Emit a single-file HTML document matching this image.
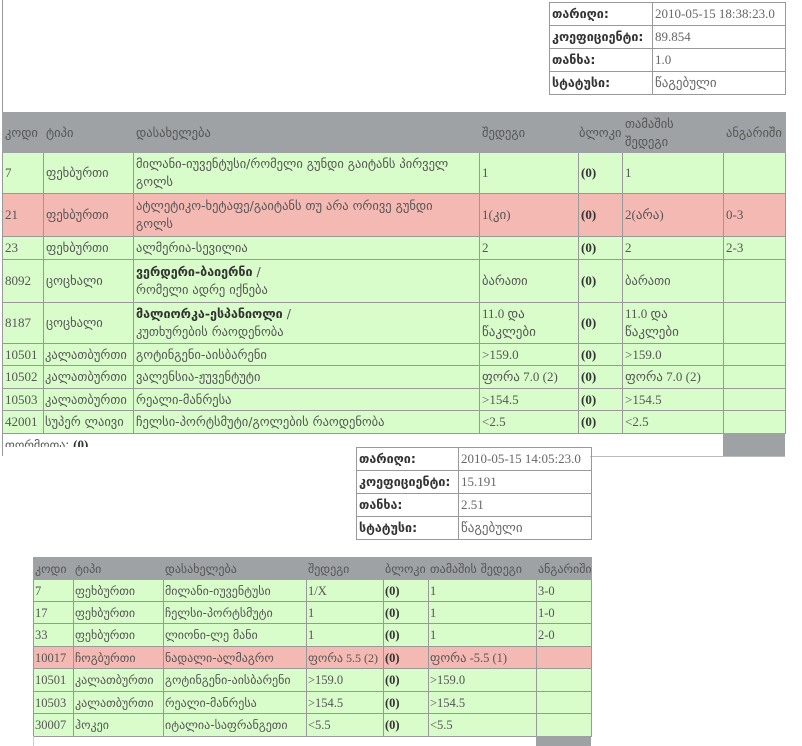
<!DOCTYPE html>
<html><head><meta charset="utf-8"><style>
body{margin:0;width:802px;height:746px;overflow:hidden;background:#fff;font-family:"DejaVu Sans","Liberation Sans",sans-serif;color:#555;font-size:12.5px;position:relative}
table{border-collapse:collapse;position:absolute;table-layout:fixed}
td{border:1px solid #999;padding:0 2px;vertical-align:middle;line-height:18px;overflow:hidden;white-space:nowrap}
.info td{height:22px}
.info td.k{font-weight:bold;color:#333}
.info td.v{font-family:"Liberation Serif",serif;font-size:13px;color:#666}
tr.h td{background:#9ea2a5;border-color:#9ea2a5;color:#555;white-space:normal}
tr.g td{background:#d9fccb}
tr.r td{background:#f5b9b4}
td.b{font-weight:bold;color:#333;font-family:"Liberation Serif",serif;font-size:13px}
.n{font-family:"Liberation Serif",serif;font-size:13px}
.m td{white-space:normal}
.t2 td{font-size:12px;padding:0 1px}
.t2 td.n,.t2 td.b{font-size:12.5px}
</style></head><body>

<div style="position:absolute;left:2px;top:0;width:1px;height:456px;background:#999"></div>

<table class="info" style="left:549px;top:2px;width:236px">
<col style="width:103px"><col style="width:133px">
<tr><td class="k">თარიღი:</td><td class="v">2010-05-15 18:38:23.0</td></tr>
<tr><td class="k">კოეფიციენტი:</td><td class="v">89.854</td></tr>
<tr><td class="k">თანხა:</td><td class="v">1.0</td></tr>
<tr><td class="k">სტატუსი:</td><td class="v">წაგებული</td></tr>
</table>

<table class="m" style="left:2px;top:112px;width:783px">
<col style="width:41px"><col style="width:90px"><col style="width:346px"><col style="width:99px"><col style="width:44px"><col style="width:101px"><col style="width:62px">
<tr class="h" style="height:40px"><td>კოდი</td><td>ტიპი</td><td>დასახელება</td><td>შედეგი</td><td style="padding:0">ბლოკი</td><td>თამაშის<br>შედეგი</td><td>ანგარიში</td></tr>
<tr class="g" style="height:41px"><td class="n">7</td><td>ფეხბურთი</td><td>მილანი-იუვენტუსი/რომელი გუნდი გაიტანს პირველ<br>გოლს</td><td class="n">1</td><td class="b">(0)</td><td class="n">1</td><td></td></tr>
<tr class="r" style="height:43px"><td class="n">21</td><td>ფეხბურთი</td><td>ატლეტიკო-ხეტაფე/გაიტანს თუ არა ორივე გუნდი<br>გოლს</td><td class="n">1(კი)</td><td class="b">(0)</td><td class="n">2(არა)</td><td class="n">0-3</td></tr>
<tr class="g" style="height:23px"><td class="n">23</td><td>ფეხბურთი</td><td>ალმერია-სევილია</td><td class="n">2</td><td class="b">(0)</td><td class="n">2</td><td class="n">2-3</td></tr>
<tr class="g" style="height:43px"><td class="n">8092</td><td>ცოცხალი</td><td><b style="color:#333">ვერდერი-ბაიერნი</b> /<br>რომელი ადრე იქნება</td><td>ბარათი</td><td class="b">(0)</td><td>ბარათი</td><td></td></tr>
<tr class="g" style="height:41px"><td class="n">8187</td><td>ცოცხალი</td><td><b style="color:#333">მალიორკა-ესპანიოლი</b> /<br>კუთხურების რაოდენობა</td><td class="n">11.0 და<br>წაკლები</td><td class="b">(0)</td><td class="n">11.0 და<br>წაკლები</td><td></td></tr>
<tr class="g" style="height:22px"><td class="n">10501</td><td style="padding:0 1px">კალათბურთი</td><td>გოტინგენი-აისბარენი</td><td class="n">&gt;159.0</td><td class="b">(0)</td><td class="n">&gt;159.0</td><td></td></tr>
<tr class="g" style="height:23px"><td class="n">10502</td><td style="padding:0 1px">კალათბურთი</td><td>ვალენსია-ჟუვენტუტი</td><td class="n">ფორა 7.0 (2)</td><td class="b">(0)</td><td class="n">ფორა 7.0 (2)</td><td></td></tr>
<tr class="g" style="height:22px"><td class="n">10503</td><td style="padding:0 1px">კალათბურთი</td><td>რეალი-მანრესა</td><td class="n">&gt;154.5</td><td class="b">(0)</td><td class="n">&gt;154.5</td><td></td></tr>
<tr class="g" style="height:23px"><td class="n">42001</td><td style="padding:0 1px">სუპერ ლაივი</td><td>ჩელსი-პორტსმუტი/გოლების რაოდენობა</td><td class="n">&lt;2.5</td><td class="b">(0)</td><td class="n">&lt;2.5</td><td></td></tr>
</table>
<div style="position:absolute;left:723px;top:433px;width:62px;height:23px;background:#9ea2a5"></div>
<div style="position:absolute;left:590px;top:456px;width:195px;height:1px;background:#bbb"></div>
<div style="position:absolute;left:5px;top:437px;height:10px;overflow:hidden;line-height:16px;font-size:12px">ფორმოთა: <b class="n" style="color:#333">(0)</b></div>

<table class="info" style="left:356px;top:447px;width:235px">
<col style="width:102px"><col style="width:133px">
<tr><td class="k">თარიღი:</td><td class="v">2010-05-15 14:05:23.0</td></tr>
<tr><td class="k">კოეფიციენტი:</td><td class="v">15.191</td></tr>
<tr><td class="k">თანხა:</td><td class="v">2.51</td></tr>
<tr><td class="k">სტატუსი:</td><td class="v">წაგებული</td></tr>
</table>

<table class="t2" style="left:33px;top:557px;width:558px">
<col style="width:40px"><col style="width:90px"><col style="width:143px"><col style="width:77px"><col style="width:45px"><col style="width:108px"><col style="width:55px">
<tr class="h" style="height:22px"><td>კოდი</td><td>ტიპი</td><td>დასახელება</td><td>შედეგი</td><td>ბლოკი</td><td style="white-space:nowrap">თამაშის შედეგი</td><td>ანგარიში</td></tr>
<tr class="g" style="height:22px"><td class="n">7</td><td>ფეხბურთი</td><td>მილანი-იუვენტუსი</td><td class="n">1/X</td><td class="b">(0)</td><td class="n">1</td><td class="n">3-0</td></tr>
<tr class="g" style="height:22px"><td class="n">17</td><td>ფეხბურთი</td><td>ჩელსი-პორტსმუტი</td><td class="n">1</td><td class="b">(0)</td><td class="n">1</td><td class="n">1-0</td></tr>
<tr class="g" style="height:23px"><td class="n">33</td><td>ფეხბურთი</td><td>ლიონი-ლე მანი</td><td class="n">1</td><td class="b">(0)</td><td class="n">1</td><td class="n">2-0</td></tr>
<tr class="r" style="height:22px"><td class="n">10017</td><td>ჩოგბურთი</td><td>ნადალი-ალმაგრო</td><td class="n" style="font-size:12px">ფორა 5.5 (2)</td><td class="b">(0)</td><td class="n">ფორა -5.5 (1)</td><td></td></tr>
<tr class="g" style="height:23px"><td class="n">10501</td><td>კალათბურთი</td><td>გოტინგენი-აისბარენი</td><td class="n">&gt;159.0</td><td class="b">(0)</td><td class="n">&gt;159.0</td><td></td></tr>
<tr class="g" style="height:22px"><td class="n">10503</td><td>კალათბურთი</td><td>რეალი-მანრესა</td><td class="n">&gt;154.5</td><td class="b">(0)</td><td class="n">&gt;154.5</td><td></td></tr>
<tr class="g" style="height:23px"><td class="n">30007</td><td>ჰოკეი</td><td>იტალია-საფრანგეთი</td><td class="n">&lt;5.5</td><td class="b">(0)</td><td class="n">&lt;5.5</td><td></td></tr>
</table>
<div style="position:absolute;left:536px;top:736px;width:55px;height:10px;background:#9ea2a5"></div>
<div style="position:absolute;left:33px;top:736px;width:1px;height:10px;background:#ccc"></div>
</body></html>
